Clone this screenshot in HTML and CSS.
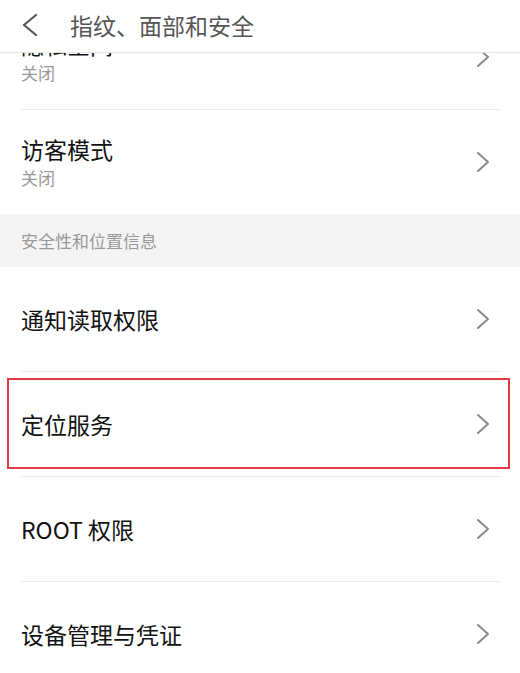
FILE: index.html
```html
<!DOCTYPE html>
<html lang="zh-CN">
<head>
<meta charset="utf-8">
<link rel="stylesheet" href="styles.css">
</head>
<body>
<header class="topbar">
  <svg class="back" width="18" height="24" viewBox="0 0 18 24"><polyline points="15,2 3,12 15,22" fill="none" stroke="#555" stroke-width="2.2" stroke-linecap="round" stroke-linejoin="round"/></svg>
  <span class="page-title">指纹、面部和安全</span>
</header>
<div class="viewport">
<main class="list">
  <div class="row">
    <div class="texts"><div class="title">隐私空间</div><div class="sub">关闭</div></div>
    <svg class="chev" width="14" height="22" viewBox="0 0 14 22"><polyline points="2,2 12,11 2,20" fill="none" stroke="#8a8a8a" stroke-width="2" stroke-linecap="round" stroke-linejoin="round"/></svg>
  </div>
  <div class="row last">
    <div class="texts"><div class="title">访客模式</div><div class="sub">关闭</div></div>
    <svg class="chev" width="14" height="22" viewBox="0 0 14 22"><polyline points="2,2 12,11 2,20" fill="none" stroke="#8a8a8a" stroke-width="2" stroke-linecap="round" stroke-linejoin="round"/></svg>
  </div>
  <div class="section">安全性和位置信息</div>
  <div class="row">
    <div class="texts"><div class="title">通知读取权限</div></div>
    <svg class="chev" width="14" height="22" viewBox="0 0 14 22"><polyline points="2,2 12,11 2,20" fill="none" stroke="#8a8a8a" stroke-width="2" stroke-linecap="round" stroke-linejoin="round"/></svg>
  </div>
  <div class="row marked">
    <div class="texts"><div class="title">定位服务</div></div>
    <svg class="chev" width="14" height="22" viewBox="0 0 14 22"><polyline points="2,2 12,11 2,20" fill="none" stroke="#8a8a8a" stroke-width="2" stroke-linecap="round" stroke-linejoin="round"/></svg>
    <div class="highlight"></div>
  </div>
  <div class="row">
    <div class="texts"><div class="title">ROOT 权限</div></div>
    <svg class="chev" width="14" height="22" viewBox="0 0 14 22"><polyline points="2,2 12,11 2,20" fill="none" stroke="#8a8a8a" stroke-width="2" stroke-linecap="round" stroke-linejoin="round"/></svg>
  </div>
  <div class="row">
    <div class="texts"><div class="title">设备管理与凭证</div></div>
    <svg class="chev" width="14" height="22" viewBox="0 0 14 22"><polyline points="2,2 12,11 2,20" fill="none" stroke="#8a8a8a" stroke-width="2" stroke-linecap="round" stroke-linejoin="round"/></svg>
  </div>
</main>
</div>
</body>
</html>
```
FILE: styles.css
```css
html, body {
  margin: 0;
  padding: 0;
  background: #fff;
  font-family: "Noto Sans CJK SC", "Noto Sans", sans-serif;
  overflow: hidden;
  height: 673px;
}
body {
  display: flex;
  flex-direction: column;
}
.topbar {
  flex: none;
  height: 52px;
  background: #fff;
  border-bottom: 1px solid #e6e6e6;
  display: flex;
  align-items: center;
}
.back {
  margin-left: 21px;
  margin-top: -3px;
}
.page-title {
  margin-left: 31px;
  margin-top: -2px;
  font-size: 23px;
  color: #555;
  line-height: 1;
}
.viewport {
  flex: 1;
  overflow: hidden;
}
.list {
  margin-top: -48px;
}
.row {
  position: relative;
  height: 104px;
  margin: 0 20px 0 21px;
  border-bottom: 1px solid #e9e9e9;
  display: flex;
  align-items: center;
  justify-content: space-between;
}
.row.last {
  border-bottom: none;
}
.title {
  font-size: 23px;
  color: #111;
  line-height: 28px;
}
.sub {
  font-size: 17px;
  color: #999;
  line-height: 22px;
  margin-top: 4px;
}
.chev {
  margin-right: 10px;
  display: block;
}
.section {
  height: 53px;
  background: #f4f4f4;
  display: flex;
  align-items: center;
  padding-left: 21px;
  font-size: 17px;
  color: #999;
}
.highlight {
  position: absolute;
  left: -14px;
  right: -10px;
  top: 6px;
  bottom: 7px;
  border: 2px solid #e13a45;
}
```
